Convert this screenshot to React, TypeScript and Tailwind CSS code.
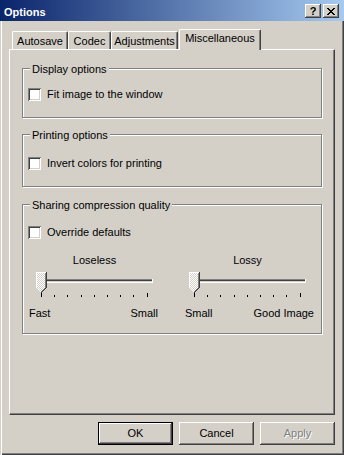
import React from 'react';

const raised =
  'shadow-[inset_-1px_-1px_#404040,inset_1px_1px_#ffffff,inset_-2px_-2px_#808080,inset_2px_2px_#d4d0c8]';

function Checkbox({ label }: { label: string }) {
  return (
    <label className="flex items-center gap-[6px] h-[13px]">
      <span className="w-[13px] h-[13px] shrink-0 bg-white shadow-[inset_1px_1px_#808080,inset_-1px_-1px_#ffffff,inset_2px_2px_#404040,inset_-2px_-2px_#d4d0c8]" />
      <span className="leading-[13px] whitespace-nowrap">{label}</span>
    </label>
  );
}

function GroupBox({
  title,
  className,
  children,
}: {
  title: string;
  className: string;
  children: React.ReactNode;
}) {
  return (
    <div
      className={`relative w-[300px] border border-[#808080] shadow-[inset_1px_1px_#ffffff,1px_1px_#ffffff] ${className}`}
    >
      <span className="absolute -top-[6px] left-[7px] px-[2px] bg-[#d4d0c8] leading-[13px] whitespace-nowrap">
        {title}
      </span>
      {children}
    </div>
  );
}

function Thumb({ id }: { id: string }) {
  const px: React.ReactNode[] = [];
  // lower taper of the pointed thumb
  for (let i = 1; i <= 4; i++) {
    const y = 20 + i;
    px.push(<rect key={`w${i}`} x={i} y={y} width="1" height="1" fill="#ffffff" />);
    px.push(<rect key={`f${i}`} x={i + 1} y={y} width={Math.max(0, 8 - 2 * i)} height="1" fill={`url(#${id})`} />);
    px.push(<rect key={`g${i}`} x={9 - i} y={y} width="1" height="1" fill="#808080" />);
    px.push(<rect key={`d${i}`} x={10 - i} y={y} width="1" height="1" fill="#404040" />);
  }
  return (
    <g>
      <rect x="1" y="6" width="8" height="15" fill={`url(#${id})`} />
      <rect x="0" y="5" width="10" height="1" fill="#ffffff" />
      <rect x="0" y="5" width="1" height="16" fill="#ffffff" />
      <rect x="9" y="6" width="1" height="15" fill="#808080" />
      <rect x="10" y="5" width="1" height="16" fill="#404040" />
      {px}
      <rect x="5" y="25" width="1" height="1" fill="#404040" />
    </g>
  );
}

function Trackbar({
  id,
  title,
  left,
  right,
  offset,
}: {
  id: string;
  title: string;
  left: string;
  right: string;
  offset: string;
}) {
  const ticks = Array.from({ length: 9 }, (_, i) => Math.round(5 + (i * 105.5) / 8));
  return (
    <div className="flex flex-col w-[129px]">
      <div className={`flex flex-col w-[117px] ${offset}`}>
        <div className="text-center leading-[13px]">{title}</div>
        <svg width="117" height="33" shapeRendering="crispEdges">
          <defs>
            <pattern id={id} width="2" height="2" patternUnits="userSpaceOnUse">
              <rect width="2" height="2" fill="#d4d0c8" />
              <rect width="1" height="1" fill="#ffffff" />
              <rect x="1" y="1" width="1" height="1" fill="#ffffff" />
            </pattern>
          </defs>
          <rect x="2" y="12" width="115" height="1" fill="#808080" />
          <rect x="2" y="12" width="1" height="4" fill="#808080" />
          <rect x="3" y="13" width="113" height="1" fill="#404040" />
          <rect x="3" y="14" width="113" height="1" fill="#d4d0c8" />
          <rect x="2" y="15" width="115" height="1" fill="#ffffff" />
          <rect x="116" y="12" width="1" height="4" fill="#ffffff" />
          {ticks.map((x, i) =>
            i === 0 || i === ticks.length - 1 ? (
              <rect key={i} x={x} y="26" width="1" height="4" fill="#000" />
            ) : (
              <rect key={i} x={x} y="28" width="1" height="2" fill="#000" />
            )
          )}
          <Thumb id={id} />
        </svg>
      </div>
      <div className="flex justify-between mt-[7px] leading-[13px] whitespace-nowrap">
        <span>{left}</span>
        <span>{right}</span>
      </div>
    </div>
  );
}

function Tab({ label, width }: { label: string; width: string }) {
  return (
    <div
      className={`h-[18px] pt-[3px] text-center leading-[13px] border-l border-t border-r border-white border-r-[#404040] rounded-t-[2px] shadow-[inset_-1px_0_#808080] ${width}`}
    >
      {label}
    </div>
  );
}

function Button({
  children,
  isDefault,
  disabled,
}: {
  children: React.ReactNode;
  isDefault?: boolean;
  disabled?: boolean;
}) {
  return (
    <div className={`w-[75px] h-[23px] ${isDefault ? 'border border-black' : ''}`}>
      <div
        className={`w-full h-full flex items-center justify-center leading-[13px] ${raised} ${
          disabled ? 'text-[#808080] [text-shadow:1px_1px_#ffffff]' : ''
        }`}
      >
        {children}
      </div>
    </div>
  );
}

export default function App() {
  return (
    <div className="w-[344px] h-[455px] flex flex-col bg-[#d4d0c8] text-[11px] text-black font-['Liberation_Sans',Arial,sans-serif] select-none shadow-[inset_1px_0_#d4d0c8,inset_2px_0_#ffffff,inset_-1px_-1px_#404040,inset_-2px_-2px_#808080]">
      {/* title bar */}
      <div className="h-[21px] flex justify-between pl-[4px] pr-[5px] bg-[linear-gradient(to_right,#0a246a,#a6caf0)]">
        <div className="pt-[6px] leading-[13px] font-bold text-white">Options</div>
        <div className="flex gap-[2px] pt-[4px]">
          <div className={`w-[16px] h-[14px] flex items-center justify-center bg-[#d4d0c8] font-bold text-[11px] leading-[12px] ${raised}`}>
            ?
          </div>
          <div className={`w-[16px] h-[14px] flex items-center justify-center bg-[#d4d0c8] ${raised}`}>
            <svg width="8" height="7" viewBox="0 0 8 7" shapeRendering="crispEdges">
              <path d="M0 0h2v1h-2zM6 0h2v1h-2zM1 1h2v1h-2zM5 1h2v1h-2zM2 2h4v1h-4zM3 3h2v1h-2zM2 4h4v1h-4zM1 5h2v1h-2zM5 5h2v1h-2zM0 6h2v1h-2zM6 6h2v1h-2z" fill="#000" />
            </svg>
          </div>
        </div>
      </div>

      <div className="flex flex-col px-[9px] pt-[8px]">
        {/* tabs */}
        <div className="flex items-end h-[20px] pl-[3px]">
          <Tab label="Autosave" width="w-[56px]" />
          <Tab label="Codec" width="w-[43px]" />
          <Tab label="Adjustments" width="w-[67px]" />
          <div className="relative z-10 -mb-px ml-[1px] w-[82px] h-[21px] pt-[2px] text-center leading-[13px] bg-[#d4d0c8] border-l border-t border-r border-white border-r-[#404040] rounded-t-[2px] shadow-[inset_-1px_0_#808080]">
            Miscellaneous
          </div>
        </div>

        {/* tab page */}
        <div className="h-[366px] border border-t-white border-l-white border-r-[#404040] border-b-[#404040] shadow-[inset_-1px_-1px_#808080] pt-[18px] pl-[12px]">
          <GroupBox title="Display options" className="h-[50px] pt-[19px] pl-[5px]">
            <Checkbox label="Fit image to the window" />
          </GroupBox>
          <GroupBox title="Printing options" className="h-[53px] mt-[16px] pt-[22px] pl-[5px]">
            <Checkbox label="Invert colors for printing" />
          </GroupBox>
          <GroupBox title="Sharing compression quality" className="h-[130px] mt-[17px] pt-[21px] pl-[5px]">
            <Checkbox label="Override defaults" />
            <div className="flex gap-[27px] mt-[15px] pl-[1px]">
              <Trackbar id="tb1" title="Loseless" left="Fast" right="Small" offset="ml-[7px]" />
              <Trackbar id="tb2" title="Lossy" left="Small" right="Good Image" offset="ml-[4px]" />
            </div>
          </GroupBox>
        </div>

        {/* buttons */}
        <div className="flex justify-end gap-[6px] mt-[7px]">
          <Button isDefault>OK</Button>
          <Button>Cancel</Button>
          <Button disabled>Apply</Button>
        </div>
      </div>
    </div>
  );
}
